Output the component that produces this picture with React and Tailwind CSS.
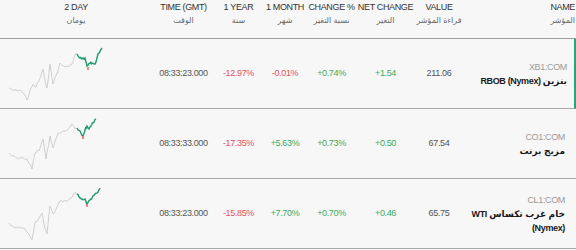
import React from "react";

const COLS = "grid grid-cols-[152px_63px_47px_46px_47px_61px_46px_114px]";

const headers = [
  { en: "2 DAY", ar: "يومان" },
  { en: "TIME (GMT)", ar: "الوقت" },
  { en: "1 YEAR", ar: "سنة" },
  { en: "1 MONTH", ar: "شهر" },
  { en: "CHANGE %", ar: "نسبة التغير" },
  { en: "NET CHANGE", ar: "التغير" },
  { en: "VALUE", ar: "قراءة المؤشر" },
];

// key points of each sparkline: [x, y] inside a 152x70 cell, split at the green part
const rows = [
  {
    ticker: "XB1:COM",
    name: ["RBOB (Nymex) بنزين"],
    time: "08:33:23.000",
    year: "-12.97%",
    month: "-0.01%",
    pct: "+0.74%",
    net: "+1.54",
    value: "211.06",
    gray: [[9, 49], [14, 51], [20, 51], [24, 55], [27, 61], [30, 52], [33, 45], [36, 48], [40, 39], [43, 30], [45, 42], [47, 49], [50, 25], [53, 45], [55, 38], [57, 35], [60, 24], [64, 27], [67, 27], [72, 25], [75, 16], [77, 15]],
    green: [[77, 15], [80, 19], [82, 20], [85, 19], [87, 27], [90, 24], [92, 24], [95, 25], [98, 15], [102, 9]],
    red: [88, 29],
  },
  {
    ticker: "CO1:COM",
    name: ["مزيج برنت"],
    time: "08:33:33.000",
    year: "-17.35%",
    month: "+5.63%",
    pct: "+0.73%",
    net: "+0.50",
    value: "67.54",
    gray: [[9, 44], [13, 47], [17, 49], [22, 49], [27, 50], [30, 55], [32, 60], [35, 44], [38, 42], [40, 39], [43, 30], [46, 50], [50, 27], [53, 39], [56, 30], [58, 24], [62, 23], [65, 22], [69, 19], [72, 15], [75, 20], [77, 19]],
    green: [[77, 19], [80, 22], [83, 27], [85, 21], [87, 17], [89, 20], [91, 17], [93, 14], [96, 10]],
    red: [83, 28],
  },
  {
    ticker: "CL1:COM",
    name: ["WTI خام غرب تكساس", "(Nymex)"],
    time: "08:33:23.000",
    year: "-15.85%",
    month: "+7.70%",
    pct: "+0.70%",
    net: "+0.46",
    value: "65.75",
    gray: [[9, 44], [14, 48], [20, 49], [25, 50], [29, 55], [32, 61], [35, 44], [38, 41], [42, 34], [45, 50], [47, 55], [50, 27], [53, 35], [56, 30], [60, 22], [64, 22], [67, 22], [71, 19], [75, 14], [77, 15]],
    green: [[77, 15], [80, 19], [82, 20], [85, 20], [87, 25], [90, 21], [92, 19], [95, 15], [98, 13], [100, 9]],
    red: [87, 26],
  },
];

// add small deterministic wiggles between key points
function roughen(points, seed) {
  let s = seed;
  const rnd = () => {
    s = (s * 9301 + 49297) % 233280;
    return s / 233280 - 0.5;
  };
  const out = [];
  for (let i = 0; i < points.length - 1; i++) {
    const [x1, y1] = points[i];
    const [x2, y2] = points[i + 1];
    out.push([x1, y1]);
    for (let k = 1; k < 3; k++) {
      const t = k / 3;
      out.push([x1 + (x2 - x1) * t, y1 + (y2 - y1) * t + rnd() * 2.4]);
    }
  }
  out.push(points[points.length - 1]);
  return out.map(([x, y]) => `${x.toFixed(1)},${y.toFixed(1)}`).join(" ");
}

function Spark({ row, seed }) {
  return (
    <svg width="152" height="70" viewBox="0 0 152 70">
      <polyline points={roughen(row.gray, seed)} fill="none" stroke="#cfcfcf" strokeWidth="1" />
      <polyline points={roughen(row.green, seed + 7)} fill="none" stroke="#1f9a6c" strokeWidth="1.4" />
      <rect x={row.red[0] - 0.8} y={row.red[1] - 1} width="1.6" height="3" fill="#ef6b6b" />
    </svg>
  );
}

const tone = (v) => (v.startsWith("-") ? "text-[#e2535f]" : "text-[#3daa5a]");

export default function App() {
  return (
    <div
      className="h-[250px] w-[576px] overflow-hidden bg-[#f7f7f7] text-[9px] tracking-[-0.35px]"
      style={{ fontFamily: '"Liberation Sans", "DejaVu Sans", sans-serif' }}
    >
      <div className={`${COLS} h-[39px] border-b border-[#9c9c9c]`}>
        {headers.map((h) => (
          <div key={h.en} className="flex flex-col items-center whitespace-nowrap pt-[1px] leading-[13px]">
            <span className="text-[#333]">{h.en}</span>
            <span className="text-[8px] text-[#666]">{h.ar}</span>
          </div>
        ))}
        <div className="flex flex-col items-end pr-[1px] pt-[1px] leading-[13px]">
          <span className="text-[#333]">NAME</span>
          <span className="text-[8px] text-[#666]">المؤشر</span>
        </div>
      </div>

      {rows.map((r, i) => (
        <div
          key={r.ticker}
          className={`${COLS} h-[70px] items-center border-b border-[#a8a8a8] ${i === 0 ? "border-r-2 border-r-[#22a77a]" : ""}`}
        >
          <Spark row={r} seed={i * 31 + 5} />
          <div className="text-center text-[#555]">{r.time}</div>
          <div className={`text-center ${tone(r.year)}`}>{r.year}</div>
          <div className={`text-center ${tone(r.month)}`}>{r.month}</div>
          <div className={`text-center ${tone(r.pct)}`}>{r.pct}</div>
          <div className={`text-center ${tone(r.net)}`}>{r.net}</div>
          <div className="text-center text-[#555]">{r.value}</div>
          <div className={`flex flex-col items-end leading-[14px] ${i === 0 ? "pr-[9px]" : "pr-[11px]"}`}>
            <span className="text-[#9a9a9a]">{r.ticker}</span>
            {r.name.map((n) => (
              <span key={n} className="font-bold text-[#1a1a1a]">
                {n}
              </span>
            ))}
          </div>
        </div>
      ))}
    </div>
  );
}
